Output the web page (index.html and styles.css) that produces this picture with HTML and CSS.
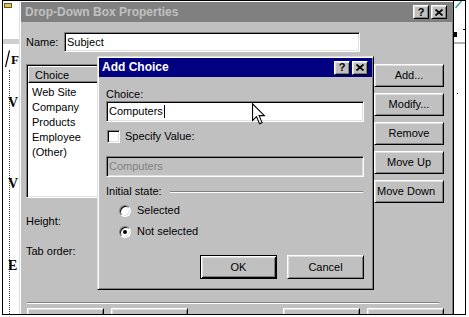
FILE: index.html
```html
<!DOCTYPE html>
<html lang="en">
<head>
<meta charset="utf-8">
<title>Drop-Down Box Properties</title>
<link rel="stylesheet" href="styles.css">
</head>
<body>
<div class="frame">
  <div class="doc-left">
    <div class="doc-icon"></div>
    <div class="doc-rule"></div>
    <div class="doc-tab">
      <svg class="tab-edge" width="5" height="17" viewBox="0 0 5 17"><path d="M0.5 17 L4.5 0.5" stroke="#000" stroke-width="1.2" fill="none"/></svg>
      <span class="tab-letter">F</span>
    </div>
    <div class="doc-margin">
      <span class="glyph g1">V</span>
      <span class="glyph g2">V</span>
      <span class="glyph g3">E</span>
    </div>
  </div>

  <div class="window props">
    <div class="titlebar">
      <span class="title-text">Drop-Down Box Properties</span>
      <div class="cap-btns">
        <span class="cap-btn">?</span>
        <span class="cap-btn"><svg width="8" height="7" viewBox="0 0 8 7"><path d="M0.5 0.5 L7.5 6.5 M7.5 0.5 L0.5 6.5" stroke="#000" stroke-width="1.7" fill="none"/></svg></span>
      </div>
    </div>
    <div class="props-body">
      <div class="name-row">
        <span class="lbl-name">Name:</span>
        <div class="field name-field">Subject</div>
      </div>
      <div class="main">
        <div class="left-col">
          <div class="listbox">
            <div class="lb-header"><span class="lb-col">Choice</span></div>
            <ul class="lb-items">
              <li>Web Site</li>
              <li>Company</li>
              <li>Products</li>
              <li>Employee</li>
              <li>(Other)</li>
            </ul>
          </div>
          <div class="form-row first">Height:</div>
          <div class="form-row">Tab order:</div>
        </div>
        <div class="btn-col">
          <div class="btn">Add...</div>
          <div class="btn">Modify...</div>
          <div class="btn">Remove</div>
          <div class="btn">Move Up</div>
          <div class="btn movedown">Move Down</div>
        </div>
      </div>
      <div class="sep"></div>
      <div class="bottom-row">
        <div class="btn wide"></div>
        <div class="btn wide"></div>
        <div class="btn wide push"></div>
        <div class="btn wide"></div>
      </div>
    </div>
  </div>

  <div class="doc-right">
    <svg width="11" height="100" viewBox="0 0 11 100">
      <path d="M1.5 7 L7.5 0" stroke="#3f9c9c" stroke-width="1.4" fill="none"/>
      <rect x="0" y="31" width="3" height="5" fill="#000"/>
      <rect x="9" y="28" width="2" height="1" fill="#000"/>
      <rect x="0" y="41" width="11" height="2" fill="#b4b4b4"/>
      <rect x="3" y="92" width="1" height="1" fill="#000"/>
    </svg>
  </div>

  <div class="window addchoice">
    <div class="titlebar">
      <span class="title-text">Add Choice</span>
      <div class="cap-btns">
        <span class="cap-btn">?</span>
        <span class="cap-btn"><svg width="8" height="7" viewBox="0 0 8 7"><path d="M0.5 0.5 L7.5 6.5 M7.5 0.5 L0.5 6.5" stroke="#000" stroke-width="1.7" fill="none"/></svg></span>
      </div>
    </div>
    <div class="ac-body">
      <div class="ac-label">Choice:</div>
      <div class="field ac-field">Computers<span class="caret"></span></div>
      <div class="check-row"><span class="chk"></span><span>Specify Value:</span></div>
      <div class="field ac-field disabled">Computers</div>
      <div class="group-row"><span>Initial state:</span><span class="groove"></span></div>
      <div class="radio-row first"><span class="radio"></span><span>Selected</span></div>
      <div class="radio-row second"><span class="radio on"></span><span>Not selected</span></div>
      <div class="ac-buttons">
        <div class="btn default">OK</div>
        <div class="btn ac-btn">Cancel</div>
      </div>
    </div>
    <svg class="cursor" width="14" height="22" viewBox="0 0 13 20">
      <path d="M0.5 0.5 L0.5 16 L4.2 12.4 L7 19 L9.3 18 L6.6 11.5 L11.5 11.5 Z" fill="#fff" stroke="#000" stroke-width="1" stroke-linejoin="miter"/>
    </svg>
  </div>
</div>
</body>
</html>
```

FILE: styles.css
```css
* { box-sizing: border-box; margin: 0; padding: 0; }

html, body {
  width: 469px;
  height: 317px;
  overflow: hidden;
  background: #fff;
}

body {
  font-family: "Liberation Sans", Arial, sans-serif;
  font-size: 11px;
  line-height: 13px;
  color: #000;
}

.frame {
  position: relative;
  display: flex;
  align-items: flex-start;
  width: 464px;
  height: 315px;
  margin-left: 2px;
  border: 1px solid #000;
  overflow: hidden;
  background: #fff;
}

/* ---------- background document (left strip) ---------- */
.doc-left {
  flex: none;
  width: 16px;
  height: 313px;
  display: flex;
  flex-direction: column;
}

.doc-icon {
  width: 8px;
  height: 5px;
  margin: 2px 0 0 1px;
  background: #d8c868;
  border: 1px solid #6a5a20;
}

.doc-rule {
  height: 5px;
  margin-top: 31px;
  background: #cfcfcf;
}

.doc-tab {
  display: flex;
  align-items: flex-end;
  height: 17px;
  margin: 6px 0 0 2px;
}

.tab-letter {
  font: bold 13px/14px "Liberation Serif", serif;
  margin-left: 1px;
}

.doc-margin {
  flex: 1;
  margin: 3px 0 0 6px;
  border-left: 1px dotted #444;
  display: flex;
  flex-direction: column;
}

.glyph {
  display: block;
  height: 13px;
  margin-left: -2px;
  font: bold 14px/13px "Liberation Serif", serif;
}
.g1 { margin-top: 26px; }
.g2 { margin-top: 68px; }
.g3 { margin-top: 69px; }

/* ---------- right strip ---------- */
.doc-right {
  flex: none;
  width: 11px;
  height: 313px;
}
.doc-right svg { display: block; }

/* ---------- classic windows ---------- */
.window {
  background: #c0c0c0;
  border: 1px solid;
  border-color: #dfdfdf #000 #000 #dfdfdf;
  box-shadow: inset 1px 1px #fff, inset -1px -1px #808080;
  padding: 1px;
  display: flex;
  flex-direction: column;
}

.titlebar {
  flex: none;
  display: flex;
  align-items: center;
  font-weight: bold;
  font-size: 12px;
  white-space: nowrap;
}
.title-text { flex: 1; }

.cap-btns { display: flex; gap: 2px; }

.cap-btn {
  width: 16px;
  height: 14px;
  display: flex;
  align-items: center;
  justify-content: center;
  background: #c0c0c0;
  color: #000;
  border: 1px solid;
  border-color: #fff #000 #000 #fff;
  box-shadow: inset 1px 1px #dfdfdf, inset -1px -1px #808080;
  font: bold 11px/11px "Liberation Sans", Arial, sans-serif;
}
.cap-btn svg { display: block; }

.btn {
  display: flex;
  align-items: center;
  justify-content: center;
  background: #c0c0c0;
  border: 1px solid;
  border-color: #fff #000 #000 #fff;
  box-shadow: inset 1px 1px #dfdfdf, inset -1px -1px #808080;
  white-space: nowrap;
}

.field {
  display: flex;
  align-items: center;
  background: #fff;
  border: 1px solid;
  border-color: #808080 #fff #fff #808080;
  box-shadow: inset 1px 1px #000, inset -1px -1px #dfdfdf;
  padding: 0 2px;
  white-space: nowrap;
}

/* ---------- Drop-Down Box Properties ---------- */
.props {
  flex: none;
  width: 435px;
  height: 330px;
  margin-top: -1px;
}

.props .titlebar {
  height: 20px;
  padding: 0 5px 0 4px;
  background: #808080;
  color: #c0c0c0;
}

.props-body {
  flex: 1;
  display: flex;
  flex-direction: column;
  padding: 10px 8px 0 5px;
}

.name-row {
  display: flex;
  align-items: center;
  height: 20px;
}
.lbl-name { width: 38px; }
.name-field { width: 296px; height: 20px; }

.main {
  display: flex;
  gap: 8px;
  margin-top: 12px;
}

.left-col {
  flex: 1;
  display: flex;
  flex-direction: column;
}

.listbox {
  height: 134px;
  background: #fff;
  border: 1px solid;
  border-color: #808080 #fff #fff #808080;
  box-shadow: inset 1px 1px #000, inset -1px -1px #dfdfdf;
  padding: 1px;
  display: flex;
  flex-direction: column;
}

.lb-header {
  height: 17px;
  display: flex;
  align-items: center;
  background: #c0c0c0;
  border: 1px solid;
  border-color: #fff #000 #000 #fff;
  box-shadow: inset -1px -1px #808080;
  padding: 1px 0 0 6px;
}

.lb-items {
  list-style: none;
  padding: 2px 0 0 4px;
}
.lb-items li {
  height: 15px;
  line-height: 15px;
}

.form-row {
  height: 30px;
  display: flex;
  align-items: center;
}
.form-row.first { margin-top: 8px; }

.btn-col {
  flex: none;
  width: 70px;
  display: flex;
  flex-direction: column;
  gap: 6px;
}
.btn-col .btn { height: 23px; }
.btn-col .movedown { justify-content: flex-start; padding-left: 2px; }

.sep {
  margin: 36px 5px 0 1px;
  height: 2px;
  border-top: 1px solid #808080;
  border-bottom: 1px solid #fff;
}

.bottom-row {
  display: flex;
  gap: 7px;
  margin: 4px 0 0 1px;
}
.bottom-row .wide { width: 77px; height: 23px; }
.bottom-row .push { margin-left: auto; }

/* ---------- Add Choice ---------- */
.addchoice {
  position: absolute;
  left: 94px;
  top: 55px;
  width: 277px;
  height: 234px;
}

.addchoice .titlebar {
  height: 19px;
  padding: 0 4px 0 3px;
  background: #000080;
  color: #fff;
}

.ac-body {
  display: flex;
  flex-direction: column;
  padding: 0 8px 0 7px;
}

.ac-label { margin-top: 11px; height: 13px; }

.ac-field { height: 21px; }
.ac-field.disabled {
  margin-top: 13px;
  background: #c0c0c0;
  color: #808080;
}

.caret {
  display: inline-block;
  width: 1px;
  height: 13px;
  margin-left: 1px;
  background: #000;
}

.check-row {
  display: flex;
  align-items: center;
  height: 13px;
  margin-top: 8px;
}

.chk {
  width: 13px;
  height: 13px;
  margin: 0 5px 0 1px;
  background: #fff;
  border: 1px solid;
  border-color: #808080 #fff #fff #808080;
  box-shadow: inset 1px 1px #000, inset -1px -1px #dfdfdf;
}

.group-row {
  display: flex;
  align-items: center;
  height: 13px;
  margin-top: 8px;
}

.groove {
  flex: 1;
  height: 2px;
  margin: 0 1px 0 8px;
  border-top: 1px solid #808080;
  border-bottom: 1px solid #fff;
}

.radio-row {
  display: flex;
  align-items: center;
  height: 13px;
}
.radio-row.first { margin-top: 6px; }
.radio-row.second { margin-top: 8px; }

.radio {
  position: relative;
  width: 12px;
  height: 12px;
  margin: 0 6px 0 13px;
  border-radius: 50%;
  background: #fff;
  border: 1px solid;
  border-color: #808080 #fff #fff #808080;
  box-shadow: inset 1px 1px #000, inset -1px -1px #dfdfdf;
}
.radio.on::after {
  content: "";
  position: absolute;
  left: 3px;
  top: 3px;
  width: 4px;
  height: 4px;
  border-radius: 50%;
  background: #000;
}

.ac-buttons {
  display: flex;
  justify-content: flex-end;
  gap: 10px;
  margin-top: 17px;
}
.ac-buttons .btn { width: 77px; height: 24px; }

.btn.default {
  border: 1px solid #000;
  box-shadow: inset 1px 1px #fff, inset -1px -1px #000, inset 2px 2px #dfdfdf, inset -2px -2px #808080;
}

.cursor {
  position: absolute;
  left: 154px;
  top: 46px;
  display: block;
}
```
